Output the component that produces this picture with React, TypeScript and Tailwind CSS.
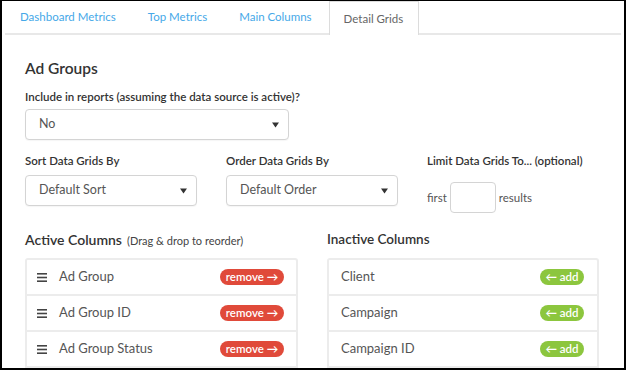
import React from "react";

const Caret = () => (
  <svg width="7" height="6" viewBox="0 0 7 6" className="absolute right-[9px] top-1/2 -translate-y-1/2">
    <path d="M0 0.5 L7 0.5 L3.5 5.5 Z" fill="#333" />
  </svg>
);

const Select = ({ text, w }: { text: string; w: string }) => (
  <div className={`relative ${w} h-[31px] border border-[#d4d4d4] rounded-[4px] bg-white flex items-center pl-[13px] text-[12.5px] text-[#555] shadow-[0_1px_1px_rgba(0,0,0,0.04)]`}>
    {text}
    <Caret />
  </div>
);

const Burger = () => (
  <svg width="10" height="9" viewBox="0 0 10 9" className="shrink-0">
    <rect x="0" y="0" width="10" height="1.6" fill="#444" />
    <rect x="0" y="3.7" width="10" height="1.6" fill="#444" />
    <rect x="0" y="7.4" width="10" height="1.6" fill="#444" />
  </svg>
);

export default function App() {
  const active = ["Ad Group", "Ad Group ID", "Ad Group Status", ""];
  const inactive = ["Client", "Campaign", "Campaign ID", ""];
  return (
    <div
      className="w-[626px] h-[370px] overflow-hidden bg-white border-2 border-t-[1px] border-black text-[#333]"
      style={{ fontFamily: "Lato, 'Open Sans', sans-serif" }}
    >
      <div className="mx-[3px] flex gap-[2px] border-b-2 border-[#e8e8e8] h-[34px]">
        {["Dashboard Metrics", "Top Metrics", "Main Columns"].map((t) => (
          <div key={t} className="h-[32px] flex items-center px-[15px] text-[11.5px] text-[#45a8e8]">
            {t}
          </div>
        ))}
        <div className="h-[34px] -mb-[2px] flex items-center pl-[14px] pr-[15px] text-[11.5px] text-[#666] bg-white border border-b-0 border-[#dcdcdc]">
          Detail Grids
        </div>
      </div>

      <div className="pl-[23px]">
        <div className="mt-[23px] text-[15.5px] leading-[20px] font-semibold text-[#333]">Ad Groups</div>
        <div className="mt-[11px] text-[11.5px] leading-[16px] font-semibold text-[#333]">
          Include in reports (assuming the data source is active)?
        </div>
        <div className="mt-[4px]">
          <Select text="No" w="w-[264px]" />
        </div>

        <div className="mt-[13px] flex">
          <div className="w-[201px]">
            <div className="text-[11.5px] leading-[16px] font-semibold">Sort Data Grids By</div>
            <div className="mt-[6px]">
              <Select text="Default Sort" w="w-[172px]" />
            </div>
          </div>
          <div className="w-[201px]">
            <div className="text-[11.5px] leading-[16px] font-semibold">Order Data Grids By</div>
            <div className="mt-[6px]">
              <Select text="Default Order" w="w-[172px]" />
            </div>
          </div>
          <div>
            <div className="text-[11.5px] leading-[16px] font-semibold">Limit Data Grids To... (optional)</div>
            <div className="mt-[13px] flex items-center text-[11.5px] text-[#555]">
              <span>first</span>
              <div className="mx-[3px] w-[46px] h-[31px] border border-[#d4d4d4] rounded-[4px] bg-white" />
              <span>results</span>
            </div>
          </div>
        </div>

        <div className="mt-[16px] flex gap-[29px]">
          <div className="w-[273px]">
            <div className="flex items-baseline h-[18px]">
              <span className="text-[14px] font-semibold">Active Columns</span>
              <span className="ml-[5px] text-[11px] text-[#444]">(Drag &amp; drop to reorder)</span>
            </div>
            <div className="mt-[11px] border-2 border-b-0 border-[#ececec] rounded-t-[3px]">
              {active.map((t, i) => (
                <div key={i} className="h-[36px] flex items-center pl-[10px] pr-[12px] border-b-2 border-[#ececec]">
                  {t && (
                    <>
                      <Burger />
                      <span className="ml-[12px] text-[13px] text-[#555]">{t}</span>
                      <span className="ml-auto h-[16px] w-[64px] rounded-full bg-[#e04a3a] text-white text-[11.5px] font-semibold flex items-center justify-center">
                        remove →
                      </span>
                    </>
                  )}
                </div>
              ))}
            </div>
          </div>
          <div className="w-[272px]">
            <div className="flex items-baseline h-[18px]">
              <span className="text-[13.5px] font-semibold">Inactive Columns</span>
            </div>
            <div className="mt-[11px] border-2 border-b-0 border-[#ececec] rounded-t-[3px]">
              {inactive.map((t, i) => (
                <div key={i} className="h-[36px] flex items-center pl-[12px] pr-[13px] border-b-2 border-[#ececec]">
                  {t && (
                    <>
                      <span className="text-[13px] text-[#555]">{t}</span>
                      <span className="ml-auto h-[16px] w-[44px] rounded-full bg-[#8cc63e] text-white text-[11.5px] font-semibold flex items-center justify-center">
                        ← add
                      </span>
                    </>
                  )}
                </div>
              ))}
            </div>
          </div>
        </div>
      </div>
    </div>
  );
}
